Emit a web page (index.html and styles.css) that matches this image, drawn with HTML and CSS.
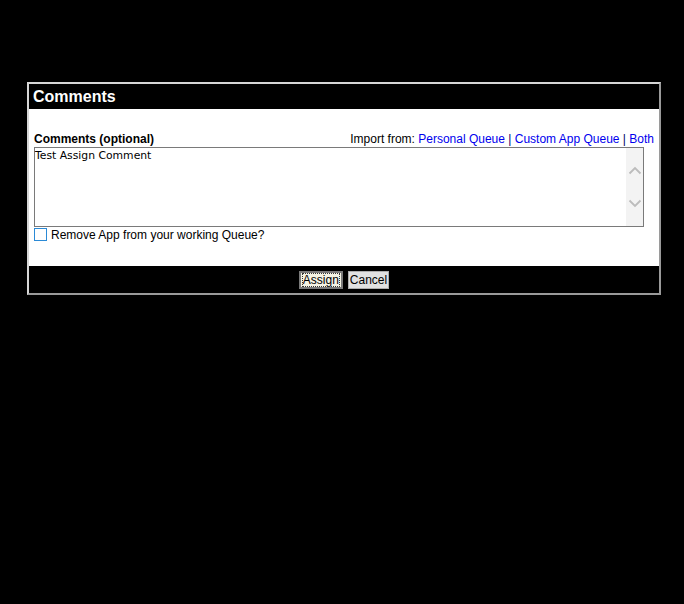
FILE: index.html
```html
<!DOCTYPE html>
<html>
<head>
<meta charset="utf-8">
<link rel="stylesheet" href="styles.css">
</head>
<body>
<div class="dialog">
  <div class="dlg-head">Comments</div>
  <div class="dlg-body">
    <div class="row-top">
      <span class="lbl">Comments (optional)</span>
      <span class="import">Import from: <a class="lnk">Personal Queue</a> <span class="sep">|</span> <a class="lnk">Custom App Queue</a> <span class="sep">|</span> <a class="lnk">Both</a></span>
    </div>
    <div class="tarea">
      <div class="tarea-text">Test Assign Comment</div>
      <div class="sbar">
        <svg class="chev" width="14" height="9" viewBox="0 0 14 9"><path d="M1.5 7.5 L7 2 L12.5 7.5" fill="none" stroke="#bcbcbc" stroke-width="1.8"/></svg>
        <svg class="chev" width="14" height="9" viewBox="0 0 14 9"><path d="M1.5 1.5 L7 7 L12.5 1.5" fill="none" stroke="#bcbcbc" stroke-width="1.8"/></svg>
      </div>
    </div>
    <div class="row-check">
      <span class="cbox"></span>
      <span class="cbl">Remove App from your working Queue?</span>
    </div>
  </div>
  <div class="dlg-foot">
    <button class="btn btn-focus"><span class="focus-ring">Assign</span></button>
    <button class="btn">Cancel</button>
  </div>
</div>
</body>
</html>
```

FILE: styles.css
```css
html, body {
  margin: 0;
  padding: 0;
  background: #000;
}
body {
  font-family: "Liberation Sans", Arial, sans-serif;
  font-size: 12px;
  color: #000;
}
.dialog {
  box-sizing: border-box;
  width: 634px;
  margin: 82px 0 0 27px;
  border: 2px solid;
  border-color: #d6d6d6 #9a9a9a #9a9a9a #d6d6d6;
  background: #fff;
}
.dlg-head {
  height: 25px;
  background: #000;
  color: #fff;
  font-weight: bold;
  font-size: 16px;
  line-height: 25px;
  padding-left: 4px;
}
.dlg-body {
  height: 157px;
  padding: 22px 5px 0 5px;
  box-sizing: border-box;
  background: #fff;
}
.row-top {
  display: flex;
  justify-content: space-between;
  align-items: baseline;
  height: 16px;
  line-height: 16px;
}
.lbl {
  font-weight: bold;
}
.lnk {
  color: #0000ee;
  text-decoration: none;
}
.sep {
  color: #00006e;
}
.tarea {
  box-sizing: border-box;
  width: 610px;
  height: 80px;
  border: 1px solid #7a7a7a;
  display: flex;
  background: #fff;
}
.tarea-text {
  flex: 1;
  font-family: "DejaVu Sans", Verdana, sans-serif;
  font-size: 10.8px;
  line-height: 13px;
  padding: 1px 0 0 0;
}
.sbar {
  width: 17px;
  background: #f3f3f3;
  display: flex;
  flex-direction: column;
  align-items: center;
  justify-content: center;
  gap: 24px;
}
.chev {
  display: block;
}
.row-check {
  display: flex;
  align-items: flex-start;
  height: 14px;
}
.cbox {
  box-sizing: border-box;
  width: 13px;
  height: 13px;
  border: 1px solid #2b8ad6;
  background: #fff;
  margin-top: 1px;
}
.cbl {
  margin-left: 4px;
  line-height: 16px;
}
.dlg-foot {
  height: 27px;
  background: #000;
  display: flex;
  justify-content: center;
  align-items: flex-start;
  gap: 5px;
  padding-top: 5px;
  box-sizing: border-box;
}
.btn {
  box-sizing: border-box;
  height: 18px;
  padding: 0 1px;
  margin: 0;
  font-family: "Liberation Sans", Arial, sans-serif;
  font-size: 12px;
  line-height: 14px;
  color: #000;
  background: #e1e1e1;
  border: 1px solid #adadad;
  border-radius: 0;
}
.btn-focus {
  width: 44px;
  border: 2px solid #7a7a7a;
  background: #f4f3e4;
  padding: 0 1px;
}
.focus-ring {
  display: inline-block;
  outline: 1px dotted #333;
  line-height: 12px;
}
```
